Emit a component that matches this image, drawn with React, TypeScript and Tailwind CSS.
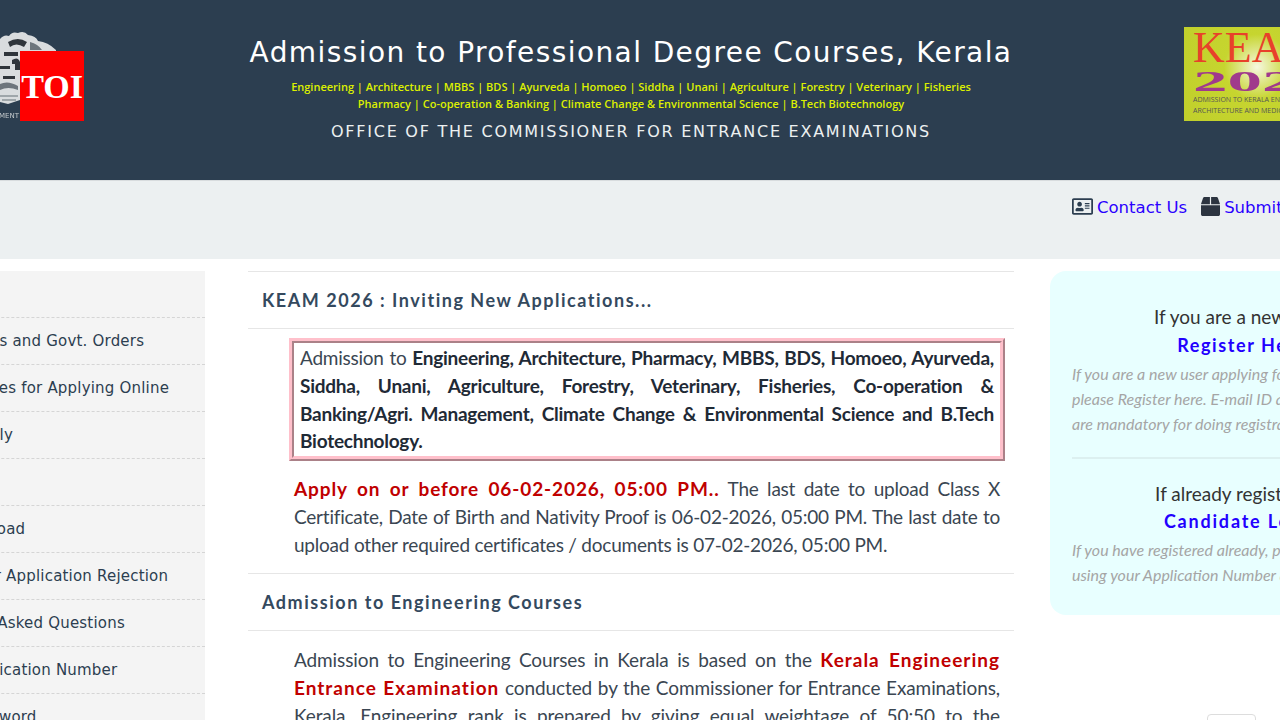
import { FaBox, FaRegAddressCard } from "react-icons/fa";

const SIDE_LINKS = [
  "",
  "Notifications and Govt. Orders",
  "Pre-requisites for Applying Online",
  "How to Apply",
  "",
  "Results Upload",
  "Reasons for Application Rejection",
  "Frequently Asked Questions",
  "Forgot Application Number",
  "Forgot Password",
];

// state emblem, mostly hidden under the TOI badge
function Crest() {
  return (
    <svg className="w-[62px] h-[90px] blur-[0.6px]" viewBox="0 0 62 90">
      <path d="M0 9 Q4 4 9 6 Q12 1 18 3 Q24 0 28 5 Q36 6 38 11 Q48 12 56 20 L56 30 L20 70 L8 74 L0 72 Z" fill="#d9dcde" />
      <path d="M8 12 Q18 6 27 12 L24 17 Q16 12 10 17 Z M4 22 h14 v4 h-14z M12 30 q6 -4 8 2 v8 h-5 v-6 h-3z M0 36 h10 v3 h-10z M3 46 h12 v3 h-12z" fill="#2f353b" />
      <path d="M30 12 Q38 14 42 20 L30 20 Z M0 54 Q8 50 18 56 L18 60 Q8 56 0 60 Z" fill="#6d757c" />
      <path d="M0 66 h18 M2 70 h14" stroke="#8c9499" strokeWidth="1.5" />
      <text x="-1" y="88" fontSize="7" fill="#c5cacd" fontFamily="DejaVu Sans, sans-serif">MENT</text>
    </svg>
  );
}

function SectionTitle({ children }: { children: string }) {
  return (
    <div className="h-[58px] flex items-center border-y border-[#e6e6e6] pl-[14px] text-[18px] font-bold tracking-[1.53px] text-[#34495e]">
      {children}
    </div>
  );
}

export default function App() {
  return (
    <div className="w-[1280px] h-[720px] overflow-hidden bg-white font-['Lato',sans-serif]">
      {/* Header */}
      <header className="h-[180px] bg-[#2c3e50] flex">
        <div className="w-[248px] shrink-0 relative">
          <div className="pt-[30px]">
            <Crest />
          </div>
          <div className="absolute left-[20px] top-[51px] w-[64px] h-[70px] bg-[#ff0000] flex items-center justify-center font-['Liberation_Serif',serif] font-bold text-[34px] text-white pt-[1px]">
            TOI
          </div>
        </div>
        <div className="w-[766px] shrink-0 text-center font-['DejaVu_Sans',sans-serif]">
          <h1 className="pt-[34px] text-[28px] leading-[38px] tracking-[1.41px] text-white">
            Admission to Professional Degree Courses, Kerala
          </h1>
          <p className="mt-[6px] font-['Open_Sans',sans-serif] text-[11px] leading-[17px] font-semibold text-[#ddf000]">
            Engineering | Architecture | MBBS | BDS | Ayurveda | Homoeo | Siddha | Unani | Agriculture | Forestry | Veterinary | Fisheries
            <br />
            Pharmacy | Co-operation &amp; Banking | Climate Change &amp; Environmental Science | B.Tech Biotechnology
          </p>
          <p className="mt-[10px] text-[16px] leading-[20px] tracking-[1.75px] text-[#ecf0f1]">
            OFFICE OF THE COMMISSIONER FOR ENTRANCE EXAMINATIONS
          </p>
        </div>
        <div className="pl-[170px] pt-[27px] grow overflow-hidden">
          <div className="w-[160px] h-[94px] bg-[radial-gradient(circle_at_73px_40px,#f6f8e0_0%,#c6d52f_32%,#bfce2a_100%)] pl-[9px] overflow-hidden">
            <div className="font-['Liberation_Serif',serif] text-[#e8412a] text-[44px] leading-[40px] pt-[1px]">KEAM</div>
            <div className="origin-left scale-x-230 font-['Liberation_Serif',serif] font-bold text-[#a03a8c] text-[30px] leading-[26px]">2026</div>
            <div className="whitespace-nowrap font-['Open_Sans',sans-serif] text-[7px] leading-[11px] text-[#555]">
              ADMISSION TO KERALA ENGINEERING
              <br />
              ARCHITECTURE AND MEDICAL
            </div>
          </div>
        </div>
      </header>

      {/* Top links */}
      <nav className="h-[79px] bg-[#ecf0f1] border-t border-[#d8dcde] flex pl-[1072px] pt-[15px] whitespace-nowrap font-['DejaVu_Sans',sans-serif] text-[16.5px] text-[#2a00ff]">
        <span className="flex items-start">
          <FaRegAddressCard className="w-[21px] h-[21px] text-[#2c3e50] mr-[4px]" />
          <span className="leading-[24px]">Contact Us</span>
        </span>
        <span className="flex items-start ml-[14px]">
          <FaBox className="w-[19px] h-[21px] text-[#2c3440] mr-[4px]" />
          <span className="leading-[24px]">Submit Grievance</span>
        </span>
      </nav>

      {/* Page body */}
      <main className="flex pt-[12px] h-[461px]">
        <aside className="w-[205px] shrink-0 bg-[#f4f4f4] overflow-hidden font-['DejaVu_Sans',sans-serif] text-[15px] tracking-[0.2px] text-[#2c3e50] whitespace-nowrap">
          {SIDE_LINKS.map((link, i) => (
            <div key={i} className="h-[47px] -ml-[89px] flex items-center border-b border-dashed border-[#d5d5d5] pt-px">
              {link}
            </div>
          ))}
        </aside>

        <section className="w-[766px] ml-[43px] shrink-0 text-[19px] leading-[28px] text-[#3a4652]">
          <SectionTitle>KEAM 2026 : Inviting New Applications...</SectionTitle>
          <div className="pl-[41px] pr-[9px] pt-[9px]">
            <div className="border-[5px] [border-style:ridge] border-[pink] pl-[6px] pr-[6px] py-[1px] text-justify leading-[27.75px] tracking-[-0.25px]">
              Admission to{" "}
              <b className="text-[#1f2a36]">
                Engineering, Architecture, Pharmacy, MBBS, BDS, Homoeo, Ayurveda, Siddha, Unani, Agriculture, Forestry, Veterinary, Fisheries, Co-operation &amp; Banking/Agri. Management, Climate Change &amp; Environmental Science and B.Tech Biotechnology.
              </b>
            </div>
          </div>
          <p className="pl-[46px] pr-[14px] pt-[14px] pb-[14px] text-justify tracking-[-0.22px]">
            <b className="text-[#c00000] tracking-[0.9px]">Apply on or before 06-02-2026, 05:00 PM..</b> The last date to upload Class X Certificate, Date of Birth and Nativity Proof is 06-02-2026, 05:00 PM. The last date to upload other required certificates / documents is 07-02-2026, 05:00 PM.
          </p>
          <SectionTitle>Admission to Engineering Courses</SectionTitle>
          <p className="pl-[46px] pr-[14px] pt-[15px] text-justify tracking-[-0.1px]">
            Admission to Engineering Courses in Kerala is based on the{" "}
            <b className="text-[#c00000] tracking-[1px]">Kerala Engineering Entrance Examination</b> conducted by the Commissioner for Entrance Examinations, Kerala. Engineering rank is prepared by giving equal weightage of 50:50 to the entrance examination marks and the marks obtained in the qualifying examination.
          </p>
        </section>

        <div className="ml-[36px] w-[384px] shrink-0 relative">
          <div className="h-[344px] w-[384px] rounded-2xl bg-[#e8ffff] px-[22px] pt-[32px] text-center">
            <p className="text-[19px] leading-[28px] text-[#333]">If you are a new user,</p>
            <p className="text-[18px] leading-[28px] font-bold tracking-[1.6px] text-[#2200ff]">Register Here</p>
            <p className="mt-[2px] whitespace-nowrap text-left text-[16px] leading-[25px] italic text-[#a5a5a5]">
              If you are a new user applying for KEAM 2026,
              <br />
              please Register here. E-mail ID and Mobile Number
              <br />
              are mandatory for doing registration.
            </p>
            <div className="mt-[21px] border-t-2 border-[#dcf0f0]" />
            <p className="mt-[21px] text-[19px] leading-[28px] text-[#333]">If already registered :</p>
            <p className="text-[18px] leading-[26px] font-bold tracking-[1.8px] text-[#2200ff]">Candidate Login</p>
            <p className="mt-[3px] whitespace-nowrap text-left text-[16px] leading-[25px] italic text-[#a5a5a5]">
              If you have registered already, please login
              <br />
              using your Application Number and Password.
            </p>
          </div>
          <div className="absolute left-[157px] top-[443px] w-[49px] h-[30px] rounded border border-[#dddddd] bg-white" />
        </div>
      </main>
    </div>
  );
}
